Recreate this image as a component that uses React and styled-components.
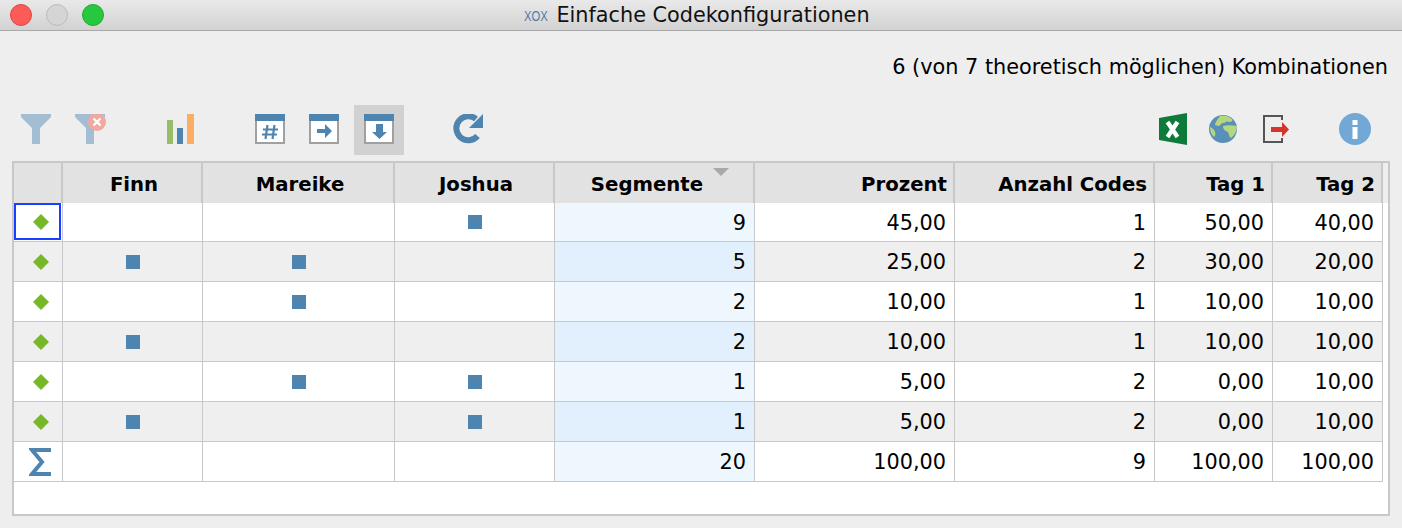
import React from 'react'
import styled, { createGlobalStyle } from 'styled-components'

const GlobalStyle = createGlobalStyle`
  html, body { margin: 0; padding: 0; background: #eeeeee; }
  body { font-family: "DejaVu Sans", "Liberation Sans", sans-serif; color: #000; }
`

const BLUE = '#4d84b0'
const FADED = '#a3bdd3'
const COLUMNS = '49px 140px 192px 160px 200px 200px 200px 118px 110px'

const rows = [
  { id: 1, marks: [0, 0, 1], values: ['9', '45,00', '1', '50,00', '40,00'] },
  { id: 2, marks: [1, 1, 0], values: ['5', '25,00', '2', '30,00', '20,00'] },
  { id: 3, marks: [0, 1, 0], values: ['2', '10,00', '1', '10,00', '10,00'] },
  { id: 4, marks: [1, 0, 0], values: ['2', '10,00', '1', '10,00', '10,00'] },
  { id: 5, marks: [0, 1, 1], values: ['1', '5,00', '2', '0,00', '10,00'] },
  { id: 6, marks: [1, 0, 1], values: ['1', '5,00', '2', '0,00', '10,00'] },
]
const total = ['20', '100,00', '9', '100,00', '100,00']

const FilterIcon = ({ clear }) => (
  <svg width="32" height="30" viewBox="0 0 32 30">
    <path d="M1 0h30v3L20 14v16h-8V14L1 3z" fill={FADED} />
    {clear && (
      <>
        <circle cx="23" cy="8" r="9" fill="#f0a8a0" />
        <path d="M19.5 4.5l7 7M26.5 4.5l-7 7" stroke="#fff" strokeWidth="2.4" />
      </>
    )}
  </svg>
)

const BarsIcon = () => (
  <svg width="27" height="30" viewBox="0 0 27 30">
    <rect x="0" y="6" width="6" height="24" fill="#98bd6a" />
    <rect x="10" y="14" width="6" height="16" fill={BLUE} />
    <rect x="20" y="0" width="7" height="30" fill="#fdac64" />
  </svg>
)

const WindowIcon = ({ children }) => (
  <svg width="30" height="30" viewBox="0 0 30 30">
    <rect x="1" y="1" width="28" height="28" fill="#fff" stroke="#a0a0a0" strokeWidth="2" />
    <rect x="0" y="0" width="30" height="7" fill={BLUE} />
    {children}
  </svg>
)

const RefreshIcon = () => (
  <svg width="32" height="30" viewBox="0 0 32 30">
    <path d="M25.5 22A12 12 0 1 1 24 5" fill="none" stroke={BLUE} strokeWidth="6" />
    <path d="M31 0v14H17z" fill={BLUE} />
  </svg>
)

const ExcelIcon = () => (
  <svg width="28" height="32" viewBox="0 0 28 32">
    <path d="M0 5L28 0v32L0 27z" fill="#0e7a3c" />
    <path d="M8.5 9l10 15M18.5 9l-10 15" stroke="#fff" strokeWidth="4.4" />
  </svg>
)

const GlobeIcon = () => (
  <svg width="28" height="28" viewBox="0 0 28 28">
    <circle cx="14" cy="14" r="14" fill="#5a8fb8" />
    <path d="M11 1c4-1 9 0 12 3 1 2 0 3-3 3-2-1-3 0-5 1-2-1-3 2-5 3-2 0-3-1-4-1 0-3 3-6 5-9z" fill="#b5d77f" />
    <path d="M14 11c4-1 9-1 14 0 0 5-2 9-6 12-2-1-2-4-3-6-2-1-5-2-5-6z" fill="#b5d77f" />
    <path d="M1 12c2 1 4 2 5 5 1 2 0 4-1 5-3-3-4-6-4-10z" fill="#b5d77f" />
  </svg>
)

const ExportIcon = () => (
  <svg width="28" height="28" viewBox="0 0 28 28">
    <path d="M19 5V1H1v26h18v-4" fill="none" stroke="#555" strokeWidth="2" />
    <path d="M8 12h11V7l7 7.5-7 7.5v-5H8z" fill="#d5352b" />
  </svg>
)

const InfoIcon = () => (
  <svg width="32" height="32" viewBox="0 0 32 32">
    <circle cx="16" cy="16" r="16" fill="#72a8d6" />
    <rect x="13.5" y="7" width="5" height="5" fill="#fff" />
    <rect x="13.5" y="14" width="5" height="12" fill="#fff" />
  </svg>
)

const Diamond = () => (
  <svg width="16" height="16" viewBox="0 0 16 16">
    <path d="M8 0l8 8-8 8-8-8z" fill="#76b82a" />
  </svg>
)

const Sigma = () => (
  <SigmaSvg width="22" height="28" viewBox="0 0 22 28">
    <path d="M22 2H3l10 12L3 26h19" fill="none" stroke={BLUE} strokeWidth="4" />
  </SigmaSvg>
)

const App = () => {
  return (
    <Page>
      <GlobalStyle />
      <TitleBar>
        <Lights>
          <Light $color="#fc5b57" $edge="#e0443e" />
          <Light $color="#d5d5d5" $edge="#bcbcbc" />
          <Light $color="#27c83f" $edge="#1dad2b" />
        </Lights>
        <AppMark>XOX</AppMark>
        <Title>Einfache Codekonfigurationen</Title>
      </TitleBar>

      <Summary>6 (von 7 theoretisch möglichen) Kombinationen</Summary>

      <Toolbar>
        <Group>
          <ToolButton $gap={4}><FilterIcon /></ToolButton>
          <ToolButton $gap={40}><FilterIcon clear /></ToolButton>
          <ToolButton $gap={40}><BarsIcon /></ToolButton>
          <ToolButton $gap={4}>
            <WindowIcon>
              <path d="M12.5 11l-2 14M19.5 11l-2 14M8 15.5h15M7 20.5h15" stroke={BLUE} strokeWidth="2.2" />
            </WindowIcon>
          </ToolButton>
          <ToolButton $gap={5}>
            <WindowIcon>
              <path d="M8 15h8v-5l7 7-7 7v-5H8z" fill={BLUE} />
            </WindowIcon>
          </ToolButton>
          <ToolButton $active $gap={39}>
            <WindowIcon>
              <path d="M12 10h7v8h4l-7.5 7L8 18h4z" fill={BLUE} />
            </WindowIcon>
          </ToolButton>
          <ToolButton><RefreshIcon /></ToolButton>
        </Group>
        <Group>
          <ToolButton><ExcelIcon /></ToolButton>
          <ToolButton $gap={4}><GlobeIcon /></ToolButton>
          <ToolButton $gap={28}><ExportIcon /></ToolButton>
          <ToolButton><InfoIcon /></ToolButton>
        </Group>
      </Toolbar>

      <Frame>
        <HeadRow>
          <HeadCell />
          <HeadCell $align="center">Finn</HeadCell>
          <HeadCell $align="center">Mareike</HeadCell>
          <HeadCell $align="center">Joshua</HeadCell>
          <HeadCell $align="center" $sorted>Segmente</HeadCell>
          <HeadCell>Prozent</HeadCell>
          <HeadCell>Anzahl Codes</HeadCell>
          <HeadCell>Tag 1</HeadCell>
          <HeadCell>Tag 2</HeadCell>
        </HeadRow>

        {rows.map((row, i) => (
          <Row key={row.id} $first={i === 0}>
            <IconCell $lead $striped={i % 2 === 1}>
              {i === 0 && <FocusBox />}
              <Diamond />
            </IconCell>
            {row.marks.map((mark, m) => (
              <IconCell key={m} $striped={i % 2 === 1}>
                {mark === 1 && <Mark />}
              </IconCell>
            ))}
            {row.values.map((value, v) => (
              <ValueCell key={v} $striped={i % 2 === 1} $sorted={v === 0}>
                {value}
              </ValueCell>
            ))}
          </Row>
        ))}

        <Row>
          <IconCell $lead><Sigma /></IconCell>
          <IconCell />
          <IconCell />
          <IconCell />
          {total.map((value, v) => (
            <ValueCell key={v} $sorted={v === 0}>{value}</ValueCell>
          ))}
        </Row>
      </Frame>
    </Page>
  )
}

export default App

const Page = styled.div`
  width: 1402px;
  height: 528px;
  overflow: hidden;
  background: #eeeeee;
`
const TitleBar = styled.div`
  position: relative;
  height: 30px;
  display: flex;
  align-items: center;
  justify-content: center;
  box-sizing: content-box;
  border-bottom: 1px solid #a9a9a9;
  background: linear-gradient(#e9e9e9, #d2d2d2);
`
const Lights = styled.div`
  position: absolute;
  left: 10px;
  top: 4px;
  display: flex;
  gap: 14px;
`
const Light = styled.span`
  width: 20px;
  height: 20px;
  border-radius: 50%;
  background: ${(p) => p.$color};
  border: 1px solid ${(p) => p.$edge};
`
const AppMark = styled.span`
  display: inline-block;
  width: 24px;
  margin-right: 8px;
  font-family: "Liberation Sans", sans-serif;
  font-size: 15px;
  color: #4d7ea8;
  white-space: nowrap;
  transform: scaleX(0.75);
  transform-origin: left center;
`
const Title = styled.span`
  margin-right: 8px;
  font-size: 20.8px;
  color: #111;
  white-space: nowrap;
`
const Summary = styled.div`
  height: 24px;
  margin-top: 24px;
  padding-right: 14px;
  font-size: 20.8px;
  line-height: 24px;
  text-align: right;
  white-space: nowrap;
`
const Toolbar = styled.div`
  display: flex;
  justify-content: space-between;
  height: 50px;
  margin-top: 26px;
  padding: 0 22px 0 11px;
`
const Group = styled.div`
  display: flex;
`
const ToolButton = styled.div`
  box-sizing: border-box;
  width: 50px;
  height: 50px;
  padding-bottom: 2px;
  display: flex;
  align-items: center;
  justify-content: center;
  margin-right: ${(p) => p.$gap || 0}px;
  background: ${(p) => (p.$active ? '#d1d1d1' : 'transparent')};
`
const Frame = styled.div`
  box-sizing: border-box;
  width: 1378px;
  height: 355px;
  margin: 6px 0 0 12px;
  border: 2px solid #c8c8c8;
  background: #fff;
`
const HeadRow = styled.div`
  display: grid;
  grid-template-columns: ${COLUMNS};
  height: 40px;
  background: #eeeeee;
`
const HeadCell = styled.div`
  position: relative;
  display: flex;
  align-items: center;
  justify-content: ${(p) => (p.$align === 'center' ? 'center' : 'flex-end')};
  padding: 2px ${(p) => (p.$sorted ? 21 : p.$align === 'center' ? 5 : 6)}px 0 ${(p) => (p.$align === 'center' && !p.$sorted ? 9 : 7)}px;
  border-right: 2px solid #c8c8c8;
  background: #e2e2e2;
  font-size: 19.7px;
  font-weight: 700;
  white-space: nowrap;
  ${(p) =>
    p.$sorted &&
    `
    &::after {
      content: "";
      position: absolute;
      right: 24px;
      top: 5px;
      border-left: 8px solid transparent;
      border-right: 8px solid transparent;
      border-top: 8px solid #a8a8a8;
    }
  `}
`
const Row = styled.div`
  display: grid;
  grid-template-columns: ${COLUMNS};
  height: ${(p) => (p.$first ? 39 : 40)}px;
`
const IconCell = styled.div`
  position: relative;
  box-sizing: border-box;
  display: flex;
  align-items: center;
  justify-content: center;
  padding-left: ${(p) => (p.$lead ? 5 : 0)}px;
  border-right: 1px solid #c8c8c8;
  border-bottom: 1px solid #c8c8c8;
  background: ${(p) => (p.$striped ? '#efefef' : '#fff')};
`
const ValueCell = styled.div`
  display: flex;
  align-items: center;
  justify-content: flex-end;
  padding: 1px 8px 0 0;
  border-right: 1px solid #c8c8c8;
  border-bottom: 1px solid #c8c8c8;
  font-size: 20.8px;
  background: ${(p) =>
    p.$sorted
      ? p.$striped
        ? '#e1f0fc'
        : '#eef6fe'
      : p.$striped
        ? '#efefef'
        : '#fff'};
`
const FocusBox = styled.div`
  position: absolute;
  left: 0;
  top: 0;
  width: 47px;
  height: 37px;
  box-sizing: border-box;
  border: 2px solid #1a3fff;
`
const Mark = styled.span`
  width: 14px;
  height: 14px;
  background: ${BLUE};
`
const SigmaSvg = styled.svg`
  margin-left: -2px;
`
